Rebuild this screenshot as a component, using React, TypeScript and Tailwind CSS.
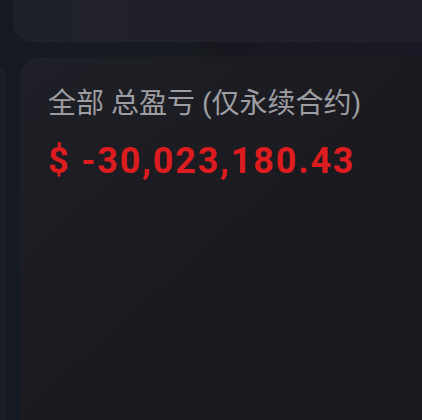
export default function App(): React.JSX.Element {
  return (
    <div
      className="flex h-[420px] w-[422px] flex-col overflow-hidden bg-linear-to-r from-[#151a22] via-[#17191f] to-[#1c1724]"
      style={{ fontFamily: 'Roboto, "Noto Sans CJK SC", sans-serif' }}
    >
      {/* Top card (clipped) */}
      <div className="ml-[13px] h-[42px] shrink-0 rounded-bl-[20px] bg-linear-to-r from-[#1f2129] to-[#221f29]" />

      {/* Bottom row */}
      <div className="mt-[15px] flex flex-1 gap-[14px]">
        {/* Left card (clipped) */}
        <div className="mt-[10px] w-[6px] shrink-0 rounded-tr-[10px] bg-[#1c1e25]" />

        {/* Main card */}
        <div className="flex-1 rounded-tl-[20px] bg-linear-to-br from-[#1f2027] via-[#1a1a1f] to-[#1b1820] pl-[28px] pt-[27px]">
          <div className="text-[28px] leading-[40px] text-[#9d9da2]">全部 总盈亏 (仅永续合约)</div>
          <div className="mt-[15px] text-[36px] font-bold leading-[44px] tracking-[1.8px] text-[#dc1c1f]">$ -30,023,180.43</div>
        </div>
      </div>
    </div>
  )
}
